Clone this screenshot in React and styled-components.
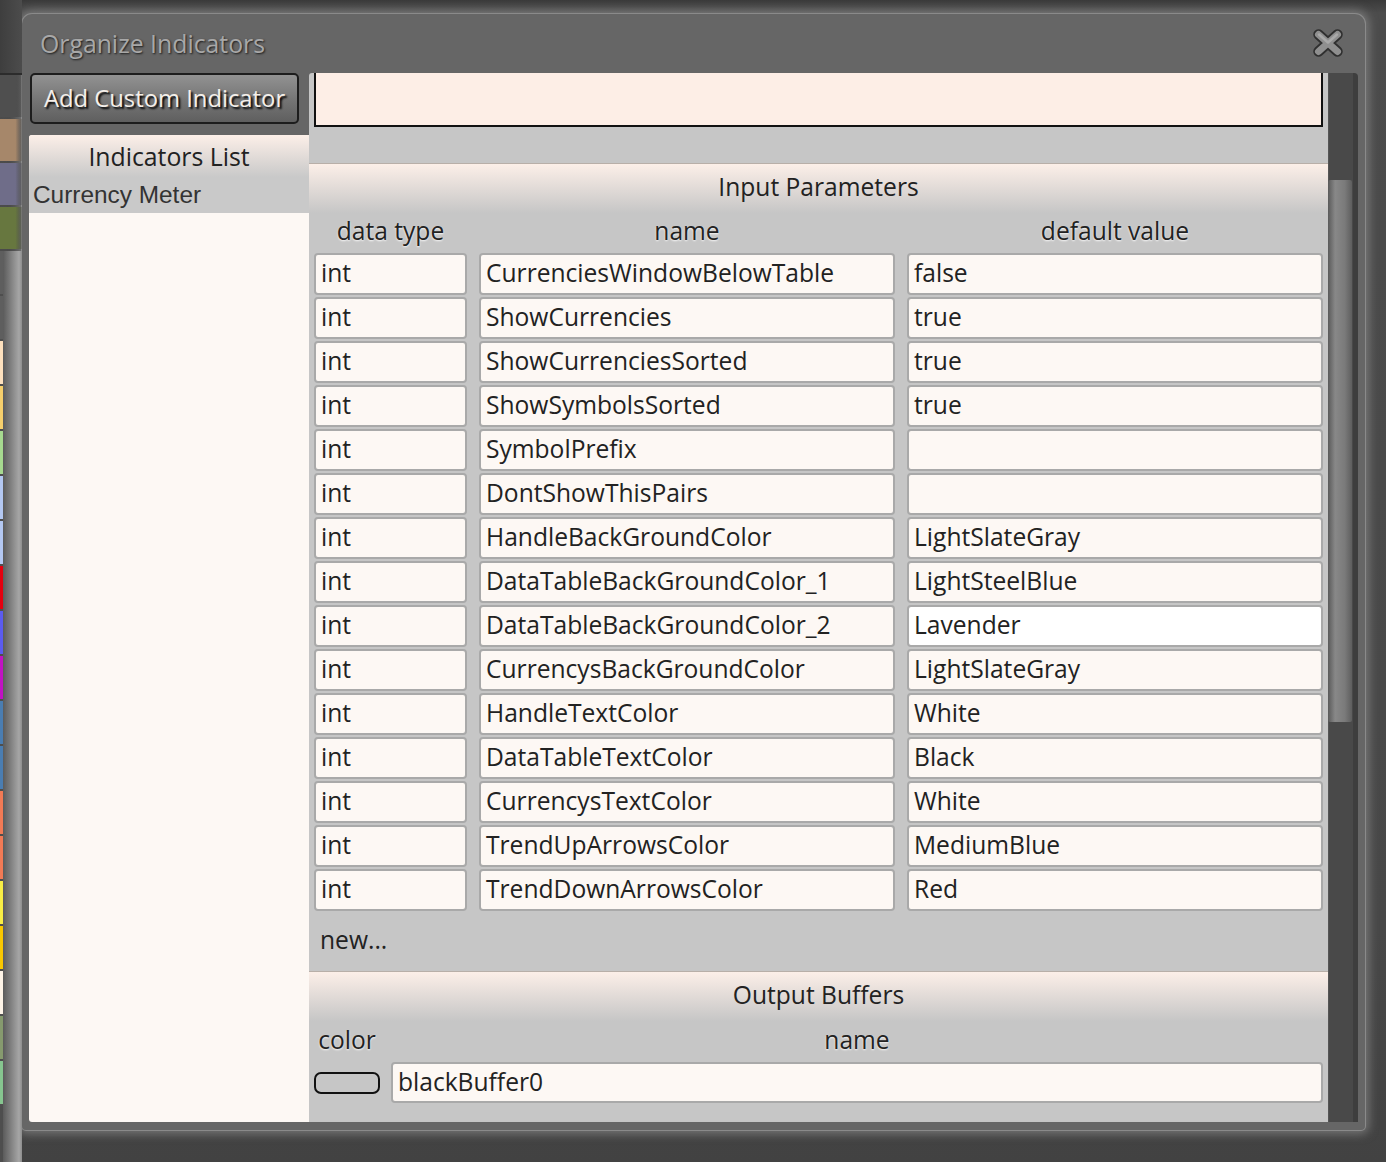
import styled, { createGlobalStyle } from "styled-components";

const GlobalStyle = createGlobalStyle`
  html, body {
    margin: 0;
    padding: 0;
    background: #454545;
    overflow: hidden;
  }
  body {
    font-family: "Open Sans", "Noto Sans", sans-serif;
    color: #222;
  }
  * { box-sizing: border-box; }
`;

const params = [
  ["int", "CurrenciesWindowBelowTable", "false"],
  ["int", "ShowCurrencies", "true"],
  ["int", "ShowCurrenciesSorted", "true"],
  ["int", "ShowSymbolsSorted", "true"],
  ["int", "SymbolPrefix", ""],
  ["int", "DontShowThisPairs", ""],
  ["int", "HandleBackGroundColor", "LightSlateGray"],
  ["int", "DataTableBackGroundColor_1", "LightSteelBlue"],
  ["int", "DataTableBackGroundColor_2", "Lavender"],
  ["int", "CurrencysBackGroundColor", "LightSlateGray"],
  ["int", "HandleTextColor", "White"],
  ["int", "DataTableTextColor", "Black"],
  ["int", "CurrencysTextColor", "White"],
  ["int", "TrendUpArrowsColor", "MediumBlue"],
  ["int", "TrendDownArrowsColor", "Red"],
];

const wideBars = ["#4f4f4f", "#a6876a", "#6f6d89", "#67773f"];
const narrowBars = [
  "#5e5e5e", "#5e5e5e", "#fde0bd", "#f6cf6c", "#a6d98f", "#b3c7f1", "#b3c7f1",
  "#e5000f", "#5b5bf0", "#c112c3", "#4a7db1", "#4a7db1", "#f27a55", "#f27a55",
  "#f8ee45", "#f9c700", "#fdf3e6", "#869a6e", "#86c58f",
];

const Screen = styled.div`
  width: 1386px;
  height: 1162px;
  display: grid;
  grid-template-columns: 22px 1fr 21px;
  grid-template-rows: 14px 1fr 32px;
  background: linear-gradient(#3a3a3a, #4c4c4c 13px, #484848 80%, #424242);
`;

const Strip = styled.div`
  grid-column: 1;
  grid-row: 1 / 4;
  position: relative;
  z-index: 1;
  display: flex;
  flex-direction: column;
`;

const StripHead = styled.div`
  height: 75px;
  background: linear-gradient(to right, #3e3e3e, #4c4c4c);
  border-bottom: 2px solid #2c2c2c;
`;

const StripBlock = styled.div`
  display: flex;
  flex-direction: column;
  gap: 2px;
  padding-bottom: 2px;
`;

const StripRail = styled.div`
  flex: 1;
  display: flex;
  flex-direction: column;
  gap: 2px;
  background: linear-gradient(to right, #4e4e4e 0 3px, #5b5b5b 3px, #a6a6a6 19px, #8d8d8d 22px);
`;

const Bar = styled.div`
  height: ${({ $wide }) => ($wide ? "42px" : "43px")};
  width: ${({ $wide }) => ($wide ? "100%" : "3px")};
  background: ${({ $color, $wide }) =>
    $wide ? `linear-gradient(to right, ${$color}, ${$color} 70%, rgba(0,0,0,0.15))` : $color};
`;

const Dialog = styled.div`
  grid-column: 2;
  grid-row: 2;
  background: #666;
  border-radius: 10px 10px 4px 4px;
  box-shadow: 0 0 0 1px #8a8a8a, 0 0 10px 4px rgba(150, 150, 150, 0.6);
  display: flex;
  flex-direction: column;
  min-height: 0;
`;

const TitleBar = styled.div`
  height: 59px;
  display: flex;
  align-items: center;
  justify-content: space-between;
  padding: 0 22px 2px 18px;
`;

const Title = styled.div`
  font-size: 24.8px;
  color: #a8a8a8;
  text-shadow: 1px 1px 2px #1c1c1c;
`;

const CloseIcon = () => (
  <svg width="30" height="28" viewBox="0 0 30 28">
    <g strokeLinecap="round" fill="none">
      <path d="M5.5 5.5 L24.5 22.5 M24.5 5.5 L5.5 22.5" stroke="#2f2f2f" strokeWidth="10.5" />
      <path d="M5.5 5.5 L24.5 22.5 M24.5 5.5 L5.5 22.5" stroke="#8f8f8f" strokeWidth="7" />
      <path d="M6 5.5 L15 13.5 M24 5.5 L15 13.5" stroke="#a9a9a9" strokeWidth="2.5" />
    </g>
  </svg>
);

const Body = styled.div`
  flex: 1;
  min-height: 0;
  display: flex;
  padding: 0 7px 8px 7px;
`;

const LeftColumn = styled.div`
  width: 280px;
  display: flex;
  flex-direction: column;
  gap: 11px;
`;

const AddButton = styled.button`
  margin-left: 1px;
  width: 269px;
  height: 51px;
  border: 2px solid #1d1d1d;
  border-radius: 5px;
  background: linear-gradient(#929292, #747474 55%, #5f5f5f);
  color: #f4efea;
  font-family: "Open Sans", "Noto Sans", sans-serif;
  font-size: 23.8px;
  text-shadow: 2px 2px 2px #000;
  padding: 0 0 2px;
  cursor: pointer;
`;

const ListPanel = styled.div`
  flex: 1;
  background: #fdf8f4;
  border-radius: 3px 0 0 3px;
  display: flex;
  flex-direction: column;
`;

const ListHeader = styled.div`
  height: 42px;
  display: flex;
  align-items: center;
  justify-content: center;
  font-size: 24.8px;
  background: linear-gradient(#fcefe8, #c9c9c9);
  border-radius: 3px 0 0 0;
`;

const ListItem = styled.div`
  height: 36px;
  display: flex;
  align-items: center;
  padding-left: 4px;
  background: ${({ $selected }) => ($selected ? "#c9c9c9" : "transparent")};
  font-family: "Liberation Sans", Arial, sans-serif;
  font-size: 24.4px;
  color: #333;
`;

const RightArea = styled.div`
  flex: 1;
  display: flex;
  min-width: 0;
`;

const ScrollArea = styled.div`
  flex: 1;
  background: #c6c6c6;
  border-radius: 3px 0 0 0;
  overflow: hidden;
  padding: 0 5px;
  display: flex;
  flex-direction: column;
`;

const Description = styled.div`
  height: 54px;
  flex: none;
  border: 2px solid #111;
  border-top: none;
  background: #fdeee6;
`;

const SectionHeader = styled.div`
  flex: none;
  height: 50px;
  margin: ${({ $top }) => $top || "0"} -5px 0;
  border-top: 1px solid #b8afa8;
  background: linear-gradient(#fcefe8, #c6c6c6);
  display: flex;
  align-items: center;
  justify-content: center;
  font-size: 24.6px;
  padding-bottom: 5px;
  color: #222;
`;

const ParamGrid = styled.div`
  display: grid;
  grid-template-columns: 153px 1fr 1fr;
  column-gap: 12px;
  row-gap: 2px;
`;

const ColHead = styled.div`
  height: ${({ $h }) => $h || 38}px;
  display: flex;
  align-items: center;
  justify-content: center;
  font-size: 24.6px;
  color: #222;
  text-shadow: 0 1px 2px rgba(255, 255, 255, 0.9);
  padding-bottom: 3px;
`;

const Cell = styled.div`
  height: ${({ $h }) => $h || 42}px;
  border: 2px solid #a9a9a9;
  border-radius: 4px;
  background: ${({ $focused }) => ($focused ? "#ffffff" : "#fdf8f4")};
  display: flex;
  align-items: center;
  padding: 0 5px 3px;
  font-size: 24.6px;
  color: #222;
  white-space: nowrap;
  overflow: hidden;
`;

const NewRow = styled.div`
  height: 60px;
  flex: none;
  display: flex;
  align-items: center;
  padding: 0 0 4px 6px;
  font-size: 24.6px;
  color: #222;
`;

const BufferGrid = styled.div`
  display: grid;
  grid-template-columns: 66px 1fr;
  column-gap: 11px;
  row-gap: 1px;
`;

const ColorSwatch = styled.div`
  align-self: center;
  height: 22px;
  border: 2px solid #111;
  border-radius: 7px;
  background: ${({ $color }) => $color || "transparent"};
`;

const ScrollTrack = styled.div`
  width: 30px;
  background: #494949;
  border-right: 5px solid #3e3e3e;
  border-left: 1px solid #555;
  border-radius: 0 4px 0 0;
  padding-top: 107px;
`;

const ScrollThumb = styled.div`
  width: 24px;
  margin-left: -1px;
  height: 542px;
  background: linear-gradient(to right, #5a5a5a, #888 30%, #7a7a7a 70%, #5e5e5e);
  border-radius: 2px;
`;

export default function App() {
  return (
    <>
      <GlobalStyle />
      <Screen>
        <Strip>
          <StripHead />
          <StripBlock>
            {wideBars.map((c, i) => (
              <Bar key={i} $wide $color={c} />
            ))}
          </StripBlock>
          <StripRail>
            {narrowBars.map((c, i) => (
              <Bar key={i} $color={c} />
            ))}
          </StripRail>
        </Strip>

        <Dialog>
          <TitleBar>
            <Title>Organize Indicators</Title>
            <CloseIcon />
          </TitleBar>
          <Body>
            <LeftColumn>
              <AddButton>Add Custom Indicator</AddButton>
              <ListPanel>
                <ListHeader>Indicators List</ListHeader>
                <ListItem $selected>Currency Meter</ListItem>
              </ListPanel>
            </LeftColumn>

            <RightArea>
              <ScrollArea>
                <Description />
                <SectionHeader $top="36px">Input Parameters</SectionHeader>
                <ParamGrid>
                  <ColHead>data type</ColHead>
                  <ColHead>name</ColHead>
                  <ColHead>default value</ColHead>
                  {params.flatMap(([type, name, value]) => [
                    <Cell key={name + "t"}>{type}</Cell>,
                    <Cell key={name + "n"}>{name}</Cell>,
                    <Cell key={name + "v"} $focused={value === "Lavender"}>
                      {value}
                    </Cell>,
                  ])}
                </ParamGrid>
                <NewRow>new...</NewRow>
                <SectionHeader>Output Buffers</SectionHeader>
                <BufferGrid>
                  <ColHead $h={40}>color</ColHead>
                  <ColHead $h={40}>name</ColHead>
                  <ColorSwatch />
                  <Cell $h={41}>blackBuffer0</Cell>
                </BufferGrid>
              </ScrollArea>
              <ScrollTrack>
                <ScrollThumb />
              </ScrollTrack>
            </RightArea>
          </Body>
        </Dialog>
      </Screen>
    </>
  );
}
